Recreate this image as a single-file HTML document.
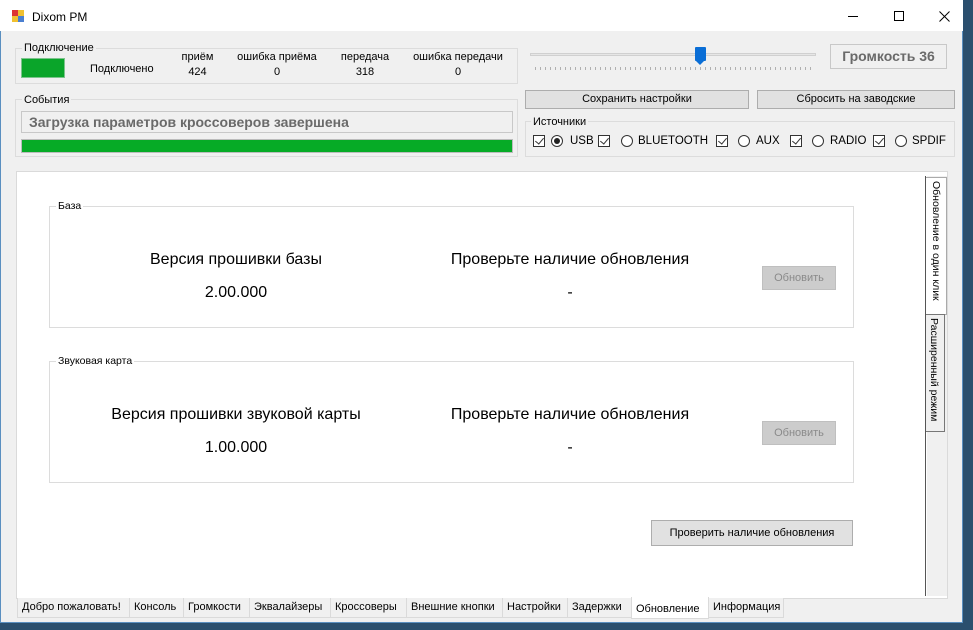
<!DOCTYPE html>
<html><head><meta charset="utf-8">
<style>
*{box-sizing:border-box;margin:0;padding:0}
body{width:973px;height:630px;overflow:hidden;position:relative;background:#2b4f6e;font-family:"Liberation Sans",sans-serif;font-size:11px;color:#000}
.a{position:absolute}
#win{left:0;top:0;width:963px;height:623px;background:#f0f0f0;border:1px solid #5a8fc0;border-top:none}
#title{left:0;top:0;width:963px;height:31px;background:#fff}
.gb{position:absolute;border:1px solid #dcdcdc}
.gl{position:absolute;background:#f0f0f0;padding:0 2px;font-size:11px}
.btn{position:absolute;background:#e1e1e1;border:1px solid #adadad;text-align:center;font-size:11px}
.c{text-align:center}
.cb{position:absolute;top:135px;width:12px;height:12px;border:1px solid #333;background:#fff}
.cb:after{content:"";position:absolute;left:3px;top:0px;width:4px;height:7px;border:solid #333;border-width:0 1.5px 1.5px 0;transform:rotate(40deg)}
.rb{position:absolute;top:135px;width:12px;height:12px;border:1px solid #333;border-radius:50%;background:#fff}
.rb.on:after{content:"";position:absolute;left:2px;top:2px;width:6px;height:6px;border-radius:50%;background:#222}
.sl{position:absolute;top:135px;font-size:11.5px}
.tab{position:absolute;top:598px;height:20px;border:1px solid #dadada;border-top:none;background:#f0f0f0;font-size:11px;line-height:18px;padding:0 4px;white-space:nowrap;overflow:hidden}
.big{font-size:16px}
</style></head><body>
<div id="win" class="a"></div>
<div id="title" class="a"></div>
<div class="a" style="left:12px;top:10px;width:6px;height:6px;background:#d33"></div>
<div class="a" style="left:18px;top:10px;width:6px;height:6px;background:#f0c030"></div>
<div class="a" style="left:12px;top:16px;width:6px;height:6px;background:#f0c030"></div>
<div class="a" style="left:18px;top:16px;width:6px;height:6px;background:#4a7fd0"></div>
<div class="a" style="left:32px;top:10px;font-size:12px">Dixom PM</div>
<div class="a" style="left:848px;top:16px;width:10px;height:1px;background:#000"></div>
<div class="a" style="left:894px;top:11px;width:10px;height:10px;border:1px solid #000"></div>
<svg class="a" style="left:939px;top:11px" width="11" height="11"><path d="M0.5 0.5L10.5 10.5M10.5 0.5L0.5 10.5" stroke="#000" stroke-width="1"/></svg>

<div class="gb" style="left:15px;top:48px;width:503px;height:36px"></div>
<div class="gl" style="left:22px;top:42px">Подключение</div>
<div class="a" style="left:21px;top:58px;width:44px;height:20px;background:#0aa52a;border:1px solid #7cc48c"></div>
<div class="a" style="left:90px;top:63px">Подключено</div>
<div class="a c" style="left:170px;top:51px;width:55px">приём<br><span style="line-height:18px">424</span></div>
<div class="a c" style="left:232px;top:51px;width:90px">ошибка приёма<br><span style="line-height:18px">0</span></div>
<div class="a c" style="left:332px;top:51px;width:66px">передача<br><span style="line-height:18px">318</span></div>
<div class="a c" style="left:408px;top:51px;width:100px">ошибка передачи<br><span style="line-height:18px">0</span></div>

<div class="gb" style="left:15px;top:99px;width:503px;height:58px"></div>
<div class="gl" style="left:22px;top:94px">События</div>
<div class="a" style="left:21px;top:111px;width:492px;height:22px;border:1px solid #c8c8c8;background:#f0f0f0;font-weight:bold;font-size:14px;color:#6a6a6a;padding:2px 7px">Загрузка параметров кроссоверов завершена</div>
<div class="a" style="left:21px;top:139px;width:492px;height:14px;background:#06ab26;border:1px solid #bcbcbc"></div>

<div class="a" style="left:530px;top:53px;width:286px;height:3px;background:#e6e6e6;border:1px solid #d0d0d0"></div>
<div class="a" style="left:535px;top:67px;width:278px;height:3px;background:repeating-linear-gradient(90deg,#b0b0b0 0 1px,transparent 1px 5px)"></div>
<div class="a" style="left:695px;top:47px;width:11px;height:14px;background:#0a6ed6;border-radius:1px"></div>
<div class="a" style="left:695px;top:60px;width:0;height:0;border-left:5.5px solid transparent;border-right:5.5px solid transparent;border-top:5px solid #0a6ed6"></div>
<div class="a" style="left:830px;top:44px;width:117px;height:25px;border:1px solid #c8c8c8;font-weight:bold;font-size:14px;color:#6a6a6a;text-align:center;line-height:23px">Громкость 36</div>

<div class="btn" style="left:525px;top:90px;width:224px;height:19px;line-height:17px">Сохранить настройки</div>
<div class="btn" style="left:757px;top:90px;width:198px;height:19px;line-height:17px">Сбросить на заводские</div>

<div class="gb" style="left:525px;top:121px;width:430px;height:36px"></div>
<div class="gl" style="left:531px;top:116px">Источники</div>
<div class="cb" style="left:533px"></div><div class="rb on" style="left:551px"></div><div class="sl" style="left:570px">USB</div>
<div class="cb" style="left:598px"></div><div class="rb" style="left:621px"></div><div class="sl" style="left:638px">BLUETOOTH</div>
<div class="cb" style="left:716px"></div><div class="rb" style="left:738px"></div><div class="sl" style="left:756px">AUX</div>
<div class="cb" style="left:790px"></div><div class="rb" style="left:812px"></div><div class="sl" style="left:830px">RADIO</div>
<div class="cb" style="left:873px"></div><div class="rb" style="left:895px"></div><div class="sl" style="left:912px">SPDIF</div>

<div class="a" style="left:16px;top:171px;width:932px;height:428px;border:1px solid #dadada;background:#fff"></div>
<div class="a" style="left:19px;top:176px;width:907px;height:420px;background:#fff;border-right:1px solid #555"></div>
<div class="a" style="left:927px;top:176px;width:20px;height:420px;background:#f0f0f0"></div>
<div class="a" style="left:926px;top:177px;width:21px;height:138px;background:#fff;border:1px solid #aaa;border-left:none"></div>
<div class="a" style="left:930px;top:181px;writing-mode:vertical-rl;font-size:10.5px;white-space:nowrap">Обновление в один клик</div>
<div class="a" style="left:926px;top:314px;width:19px;height:118px;background:#f0f0f0;border:1px solid #777;border-left:none"></div>
<div class="a" style="left:928px;top:318px;writing-mode:vertical-rl;font-size:10.5px;white-space:nowrap">Расширенный режим</div>

<div class="gb" style="left:49px;top:206px;width:805px;height:122px;background:#fff"></div>
<div class="a" style="left:56px;top:200px;background:#fff;padding:0 2px;font-size:10.5px">База</div>
<div class="a c big" style="left:96px;top:251px;width:280px">Версия прошивки базы</div>
<div class="a c big" style="left:96px;top:284px;width:280px">2.00.000</div>
<div class="a c big" style="left:420px;top:251px;width:300px">Проверьте наличие обновления</div>
<div class="a c big" style="left:420px;top:284px;width:300px">-</div>
<div class="btn" style="left:762px;top:266px;width:74px;height:24px;line-height:22px;color:#8a8a8a;background:#cccccc;border-color:#bfbfbf">Обновить</div>

<div class="gb" style="left:49px;top:361px;width:805px;height:122px;background:#fff"></div>
<div class="a" style="left:56px;top:355px;background:#fff;padding:0 2px;font-size:10.5px">Звуковая карта</div>
<div class="a c big" style="left:86px;top:406px;width:300px">Версия прошивки звуковой карты</div>
<div class="a c big" style="left:86px;top:439px;width:300px">1.00.000</div>
<div class="a c big" style="left:420px;top:406px;width:300px">Проверьте наличие обновления</div>
<div class="a c big" style="left:420px;top:439px;width:300px">-</div>
<div class="btn" style="left:762px;top:421px;width:74px;height:24px;line-height:22px;color:#8a8a8a;background:#cccccc;border-color:#bfbfbf">Обновить</div>

<div class="btn" style="left:651px;top:520px;width:202px;height:26px;line-height:24px">Проверить наличие обновления</div>

<div class="tab" style="left:17px;width:113px">Добро пожаловать!</div>
<div class="tab" style="left:129px;width:55px">Консоль</div>
<div class="tab" style="left:183px;width:67px">Громкости</div>
<div class="tab" style="left:249px;width:82px">Эквалайзеры</div>
<div class="tab" style="left:330px;width:77px">Кроссоверы</div>
<div class="tab" style="left:406px;width:97px">Внешние кнопки</div>
<div class="tab" style="left:502px;width:66px">Настройки</div>
<div class="tab" style="left:567px;width:65px">Задержки</div>
<div class="tab" style="left:631px;width:78px;background:#fff;top:597px;height:22px;line-height:24px">Обновление</div>
<div class="tab" style="left:708px;width:76px">Информация</div>
</body></html>
